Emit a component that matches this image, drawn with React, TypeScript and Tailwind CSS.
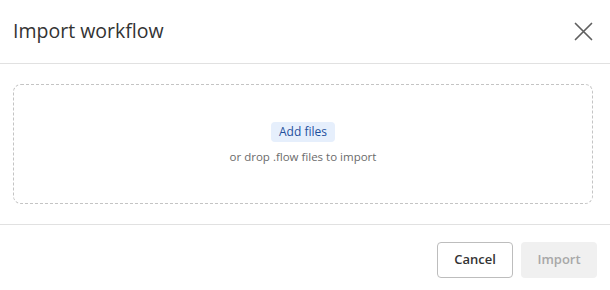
export default function App() {
  return (
    <div
      className="w-[610px] h-[290px] bg-white flex flex-col text-[#333]"
      style={{ fontFamily: '"Open Sans", "Noto Sans", sans-serif' }}
    >
      <header className="h-[64px] flex items-center justify-between pl-[13px] pr-[17px] border-b border-[#e1e1e1]">
        <h1 className="text-[19.5px] leading-none text-[#333] -mt-[1px]">Import workflow</h1>
        <button className="text-[#5f5f5f] -mt-[1px]">
          <svg width="19" height="19" viewBox="0 0 19 19" fill="none" stroke="currentColor" strokeWidth="1.7" strokeLinecap="round">
            <path d="M1.5 1.5 L17.5 17.5 M17.5 1.5 L1.5 17.5" />
          </svg>
        </button>
      </header>

      <div className="pt-[20px] pb-[20px] pl-[13px] pr-[17px] border-b border-[#e1e1e1]">
        <div className="h-[120px] rounded-[8px] border border-dashed border-[#c4c4c4] flex flex-col items-center justify-center gap-[6px]">
          <button className="px-[8px] h-[20px] rounded-[4px] bg-[#e6effc] text-[#1e4f9c] text-[12px] leading-none">
            Add files
          </button>
          <span className="text-[11.5px] text-[#6b6b6b]">or drop .flow files to import</span>
        </div>
      </div>

      <footer className="flex justify-end gap-[8px] pt-[17px] pr-[13px]">
        <button className="w-[76px] h-[36px] rounded-[4px] border border-[#bdbdbd] text-[13px] font-semibold text-[#333] bg-white">
          Cancel
        </button>
        <button className="w-[76px] h-[36px] rounded-[4px] bg-[#f0f0f0] text-[13px] font-semibold text-[#a8a8a8]">
          Import
        </button>
      </footer>
    </div>
  );
}
